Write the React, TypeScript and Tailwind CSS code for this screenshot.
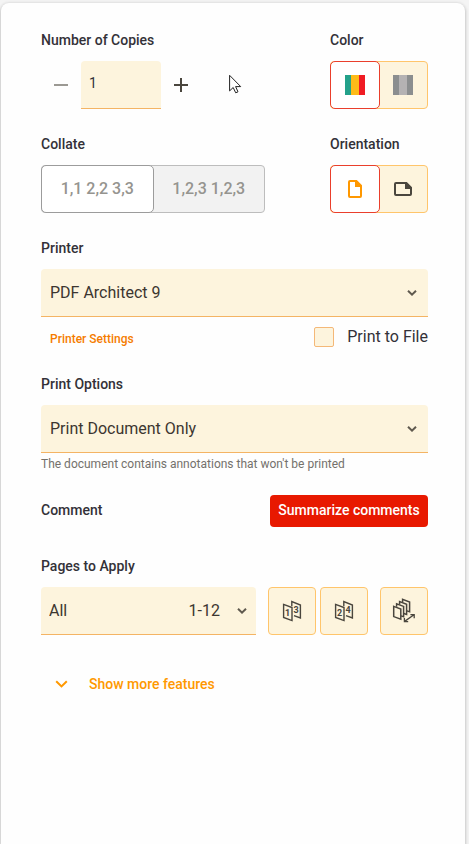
import { useState } from "react";
import type { ReactNode } from "react";

interface SegmentProps {
  name: string;
  value: string;
  label: string;
  checked: boolean;
  onSelect: (value: string) => void;
  children: ReactNode;
}

// One half of the color / orientation toggles
function Segment({ name, value, label, checked, onSelect, children }: SegmentProps) {
  return (
    <label
      className={
        checked
          ? "-my-px -ml-px flex flex-1 cursor-pointer items-center justify-center rounded-[5px] border border-[#ea3f2c] bg-white text-[#ff9800]"
          : "flex flex-1 cursor-pointer items-center justify-center text-[#4a463e]"
      }
    >
      <input
        type="radio"
        name={name}
        value={value}
        aria-label={label}
        checked={checked}
        onChange={() => onSelect(value)}
        className="sr-only"
      />
      {children}
    </label>
  );
}

function Stripes({ side, middle, end }: { side: string; middle: string; end: string }) {
  return (
    <svg width="20" height="20" viewBox="0 0 20 20" aria-hidden="true">
      <rect width="6" height="20" fill={side} />
      <rect x="6" width="8" height="20" fill={middle} />
      <rect x="14" width="6" height="20" fill={end} />
    </svg>
  );
}

function Chevron({ className }: { className: string }) {
  return (
    <svg
      width="10"
      height="6"
      viewBox="0 0 10 6"
      fill="none"
      stroke="currentColor"
      strokeWidth="2"
      className={className}
      aria-hidden="true"
    >
      <path d="M1 0.8 5 4.6 9 0.8" />
    </svg>
  );
}

// Two folded sheets with page numbers on them
function PagesIcon({ left, right }: { left: string; right: string }) {
  return (
    <svg width="20" height="22" viewBox="0 0 20 22" fill="none" stroke="#4a463e" strokeWidth="1.4" aria-hidden="true">
      <path d="M1.6 4.4 10 7.6v13L1.6 17.4z" />
      <path d="M9.8 6.2V1.6L18.4 5v13L12 15.6" />
      <text x="3" y="15.6" fontSize="9" fontWeight="700" fill="#4a463e" stroke="none">
        {left}
      </text>
      <text x="11.4" y="12.8" fontSize="9" fontWeight="700" fill="#4a463e" stroke="none">
        {right}
      </text>
    </svg>
  );
}

const labelClass = "block h-5 text-sm leading-5 font-medium";
const selectClass =
  "h-12 w-full appearance-none rounded-t-[4px] border-b border-[#f4b464] bg-[#fdf4dd] pt-px text-base text-[#3c3630] outline-none";
const iconButtonClass =
  "flex h-12 w-12 shrink-0 items-center justify-center rounded-[4px] border border-[#ffc56b] bg-[#fdf4dd]";

export default function App() {
  const [copies, setCopies] = useState("1");
  const [color, setColor] = useState("color");
  const [orientation, setOrientation] = useState("portrait");
  const [toFile, setToFile] = useState(false);

  const changeCopies = (step: number) => {
    setCopies(String(Math.max(1, (Number(copies) || 1) + step)));
  };

  return (
    <div className="flex min-h-screen flex-col overflow-hidden bg-[#f4f4f4] pt-[3px] pr-1 pl-px font-[Roboto,sans-serif] text-[#333138]">
      <main className="relative flex-1 rounded-t-[8px] bg-[#fefefe] pt-[27px] pr-[37px] pl-10 shadow-[0_1px_3px_1px_#c8c8c8]">
        <div className="flex justify-between">
          <div>
            <label htmlFor="copies" className={labelClass}>
              Number of Copies
            </label>
            <div className="mt-[11px] flex h-12">
              <button
                type="button"
                aria-label="Fewer copies"
                onClick={() => changeCopies(-1)}
                className="flex w-10 items-center justify-center text-[#9b9993]"
              >
                <svg width="14" height="14" viewBox="0 0 14 14" fill="currentColor">
                  <rect y="6" width="14" height="2" />
                </svg>
              </button>
              <input
                id="copies"
                type="text"
                value={copies}
                onChange={(e) => setCopies(e.target.value)}
                className="w-20 rounded-t-[4px] border-b border-[#f4b464] bg-[#fdf4dd] px-2 pb-[3px] text-sm outline-none"
              />
              <button
                type="button"
                aria-label="More copies"
                onClick={() => changeCopies(1)}
                className="flex w-10 items-center justify-center text-[#4a463e]"
              >
                <svg width="14" height="14" viewBox="0 0 14 14" fill="currentColor">
                  <path d="M6 0h2v6h6v2H8v6H6V8H0V6h6z" />
                </svg>
              </button>
            </div>
          </div>
          <fieldset>
            <legend className={labelClass}>Color</legend>
            <div className="mt-[11px] flex h-12 w-[98px] rounded-[4px] border border-[#ffc56b] bg-[#fdf4dd]">
              <Segment name="color" value="color" label="Color" checked={color === "color"} onSelect={setColor}>
                <Stripes side="#23a18a" middle="#fdbb18" end="#f01c24" />
              </Segment>
              <Segment name="color" value="gray" label="Grayscale" checked={color === "gray"} onSelect={setColor}>
                <Stripes side="#8b8e8f" middle="#b4b2b3" end="#8b8e8f" />
              </Segment>
            </div>
          </fieldset>
        </div>

        <div className="mt-[25px] flex justify-between">
          <fieldset disabled>
            <legend className={labelClass}>Collate</legend>
            <div className="mt-[11px] flex h-12 w-56 rounded-[4px] border border-[#bdbdbd] bg-[#f2f2f2] text-base font-medium text-[#95948f]">
              <label className="-my-px -ml-px flex flex-1 items-center justify-center rounded-[5px] border border-[#9c9c9c] bg-white pb-px">
                <input type="radio" name="collate" value="off" defaultChecked className="sr-only" />
                1,1 2,2 3,3
              </label>
              <label className="flex flex-1 items-center justify-center pb-px">
                <input type="radio" name="collate" value="on" className="sr-only" />
                1,2,3 1,2,3
              </label>
            </div>
          </fieldset>
          <fieldset>
            <legend className={labelClass}>Orientation</legend>
            <div className="mt-[11px] flex h-12 w-[98px] rounded-[4px] border border-[#ffc56b] bg-[#fdf4dd]">
              <Segment
                name="orientation"
                value="portrait"
                label="Portrait"
                checked={orientation === "portrait"}
                onSelect={setOrientation}
              >
                <svg width="14" height="18" viewBox="0 0 14 18" aria-hidden="true">
                  <path d="M2 1h6.4L13 5.6V16a1 1 0 0 1-1 1H2a1 1 0 0 1-1-1V2a1 1 0 0 1 1-1z" fill="none" stroke="currentColor" strokeWidth="2" />
                  <path d="M7 1h1.6L13 5.4V7H7z" fill="currentColor" />
                </svg>
              </Segment>
              <Segment
                name="orientation"
                value="landscape"
                label="Landscape"
                checked={orientation === "landscape"}
                onSelect={setOrientation}
              >
                <svg width="18" height="14" viewBox="0 0 18 14" aria-hidden="true">
                  <path d="M2 1h10.4L17 5.6V12a1 1 0 0 1-1 1H2a1 1 0 0 1-1-1V2a1 1 0 0 1 1-1z" fill="none" stroke="currentColor" strokeWidth="2" />
                  <path d="M11 1h1.6L17 5.4V7h-6z" fill="currentColor" />
                </svg>
              </Segment>
            </div>
          </fieldset>
        </div>

        <div className="mt-[25px]">
          <label htmlFor="printer" className={labelClass}>
            Printer
          </label>
          <div className="relative mt-[11px]">
            <select id="printer" className={`${selectClass} pr-8 pl-[9px]`}>
              <option>PDF Architect 9</option>
            </select>
            <Chevron className="pointer-events-none absolute top-[21px] right-[11px] text-[#5f594e]" />
          </div>
          <div className="mt-[10px] flex h-5 items-center justify-between">
            <a href="#printer-settings" className="ml-[9px] pt-[3px] text-xs font-medium text-[#f57c00]">
              Printer Settings
            </a>
            <label className="flex items-center gap-[13px] text-base leading-5">
              <input
                type="checkbox"
                checked={toFile}
                onChange={(e) => setToFile(e.target.checked)}
                className="h-5 w-5 appearance-none rounded-[2px] border border-[#f4b878] bg-[#fdf4dd] checked:bg-[#ff9800]"
              />
              Print to File
            </label>
          </div>
        </div>

        <div className="mt-[27px]">
          <label htmlFor="options" className={labelClass}>
            Print Options
          </label>
          <div className="relative mt-[11px]">
            <select id="options" className={`${selectClass} pr-8 pl-[9px]`}>
              <option>Print Document Only</option>
            </select>
            <Chevron className="pointer-events-none absolute top-[21px] right-[11px] text-[#5f594e]" />
          </div>
          <p className="mt-[3px] text-xs leading-4 text-[#74716c]">
            The document contains annotations that won't be printed
          </p>
        </div>

        <div className="mt-[23px] flex h-8 items-center justify-between">
          <h2 className="pb-[2px] text-sm leading-5 font-medium">Comment</h2>
          <button
            type="button"
            className="h-8 w-[158px] rounded-[4px] bg-[#e81900] pb-[2px] text-center text-sm font-medium text-white"
          >
            Summarize comments
          </button>
        </div>

        <div className="mt-[29px]">
          <label htmlFor="pages" className={labelClass}>
            Pages to Apply
          </label>
          <div className="mt-[11px] flex">
            <div className="relative mr-3 flex-1">
              <select id="pages" className={`${selectClass} pr-20 pl-2`}>
                <option>All</option>
              </select>
              <span className="pointer-events-none absolute top-3 right-9 text-base leading-6 text-[#3c3630]">1-12</span>
              <Chevron className="pointer-events-none absolute top-[21px] right-[9px] text-[#5f594e]" />
            </div>
            <button type="button" aria-label="Odd pages" className={`${iconButtonClass} mr-1`}>
              <PagesIcon left="1" right="3" />
            </button>
            <button type="button" aria-label="Even pages" className={`${iconButtonClass} mr-3`}>
              <PagesIcon left="2" right="4" />
            </button>
            <button type="button" aria-label="Reverse order" className={iconButtonClass}>
              <svg width="24" height="26" viewBox="0 0 24 26" fill="none" stroke="#4a463e" strokeWidth="1.5" aria-hidden="true">
                <path d="M1.7 8.4 8.8 11v10.2L1.7 18.6z" />
                <path d="M4.6 8.8V5.8l7 2.6v10.4l-2.6-.9" />
                <path d="M7.6 6.4V3.6l7 2.6v10.2l-2.8-.9" />
                <path d="M10.6 4.2V1.4l7 2.6v9.8l-2.8-.9" />
                <path strokeWidth="1.3" d="M12.6 23.4 22 16.8M18.4 16.6h3.8v3.6M12.4 20v3.6h3.8" />
              </svg>
            </button>
          </div>
        </div>

        <button type="button" className="mt-[39px] ml-[14px] flex h-5 items-center gap-[21px] text-sm font-medium text-[#ff9800]">
          <svg width="13" height="8" viewBox="0 0 13 8" fill="none" stroke="currentColor" strokeWidth="2" aria-hidden="true">
            <path d="M1.2 1.2 6.5 6.4 11.8 1.2" />
          </svg>
          Show more features
        </button>

        {/* Mouse pointer */}
        <svg
          width="13"
          height="20"
          viewBox="0 0 13 20"
          className="pointer-events-none absolute top-[71px] left-[228px]"
          aria-hidden="true"
        >
          <path
            d="M.6 1.3v15.6l3.6-3.4 2.5 5.3 2.3-1-2.4-5.2h5.1z"
            fill="#fff"
            stroke="#222"
            strokeWidth="1"
          />
        </svg>
      </main>
    </div>
  );
}
